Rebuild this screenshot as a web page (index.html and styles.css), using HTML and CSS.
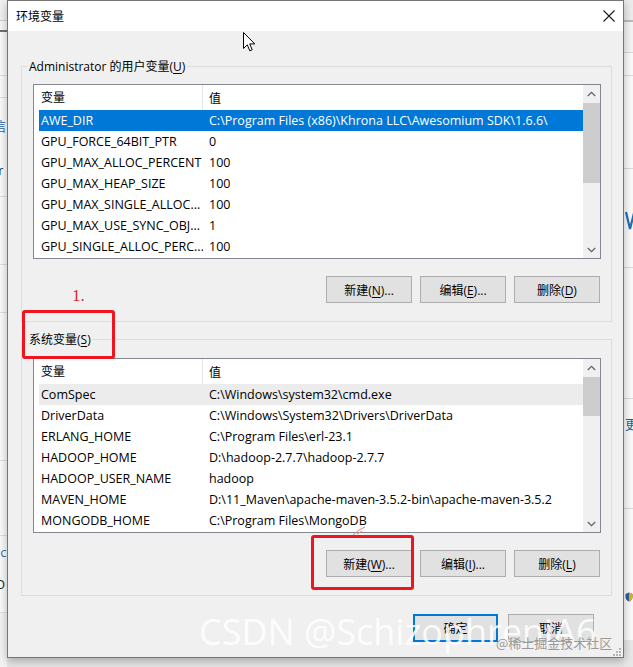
FILE: index.html
```html
<!DOCTYPE html>
<html lang="zh-CN">
<head>
<meta charset="utf-8">
<title>环境变量</title>
<link rel="stylesheet" href="styles.css">
</head>
<body>
<div class="screen">
  <div class="bg bg-left">
    <span class="frag frag-xin">信</span>
    <span class="frag frag-r">r</span>
    <span class="frag frag-ic">ic</span>
    <span class="frag frag-o">O</span>
  </div>

  <div class="dialog">
    <div class="titlebar">
      <span class="title">环境变量</span>
      <svg class="close" width="12" height="12" viewBox="0 0 12 12"><path d="M0.5 0.5 L11.5 11.5 M11.5 0.5 L0.5 11.5" stroke="#1a1a1a" stroke-width="1.1" fill="none"/></svg>
    </div>

    <div class="body">
      <fieldset class="group">
        <legend>Administrator 的用户变量(<u>U</u>)</legend>
        <div class="group-inner">
          <div class="list">
            <div class="list-main">
              <div class="head"><span class="c1">变量</span><span class="c2">值</span></div>
              <div class="row sel"><span class="c1">AWE_DIR</span><span class="c2">C:\Program Files (x86)\Khrona LLC\Awesomium SDK\1.6.6\</span></div>
              <div class="row"><span class="c1">GPU_FORCE_64BIT_PTR</span><span class="c2">0</span></div>
              <div class="row"><span class="c1">GPU_MAX_ALLOC_PERCENT</span><span class="c2">100</span></div>
              <div class="row"><span class="c1">GPU_MAX_HEAP_SIZE</span><span class="c2">100</span></div>
              <div class="row"><span class="c1">GPU_MAX_SINGLE_ALLOC...</span><span class="c2">100</span></div>
              <div class="row"><span class="c1">GPU_MAX_USE_SYNC_OBJ...</span><span class="c2">1</span></div>
              <div class="row"><span class="c1">GPU_SINGLE_ALLOC_PERC...</span><span class="c2">100</span></div>
            </div>
            <div class="scrollbar">
              <div class="arrow"><svg width="9" height="6" viewBox="0 0 9 6"><path d="M0.8 5 L4.5 1.3 L8.2 5" stroke="#606060" stroke-width="1.2" fill="none"/></svg></div>
              <div class="track"><div class="thumb thumb-user"></div></div>
              <div class="arrow"><svg width="9" height="6" viewBox="0 0 9 6"><path d="M0.8 1 L4.5 4.7 L8.2 1" stroke="#606060" stroke-width="1.2" fill="none"/></svg></div>
            </div>
          </div>
          <div class="btnrow">
            <button class="btn">新建(<u>N</u>)...</button>
            <button class="btn">编辑(<u>E</u>)...</button>
            <button class="btn">删除(<u>D</u>)</button>
          </div>
        </div>
      </fieldset>

      <fieldset class="group group-sys">
        <legend>系统变量(<u>S</u>)</legend>
        <div class="group-inner">
          <div class="list">
            <div class="list-main">
              <div class="head"><span class="c1">变量</span><span class="c2">值</span></div>
              <div class="row sel-dim"><span class="c1">ComSpec</span><span class="c2">C:\Windows\system32\cmd.exe</span></div>
              <div class="row"><span class="c1">DriverData</span><span class="c2">C:\Windows\System32\Drivers\DriverData</span></div>
              <div class="row"><span class="c1">ERLANG_HOME</span><span class="c2">C:\Program Files\erl-23.1</span></div>
              <div class="row"><span class="c1">HADOOP_HOME</span><span class="c2">D:\hadoop-2.7.7\hadoop-2.7.7</span></div>
              <div class="row"><span class="c1">HADOOP_USER_NAME</span><span class="c2">hadoop</span></div>
              <div class="row"><span class="c1">MAVEN_HOME</span><span class="c2">D:\11_Maven\apache-maven-3.5.2-bin\apache-maven-3.5.2</span></div>
              <div class="row"><span class="c1">MONGODB_HOME</span><span class="c2">C:\Program Files\MongoDB</span></div>
            </div>
            <div class="scrollbar">
              <div class="arrow"><svg width="9" height="6" viewBox="0 0 9 6"><path d="M0.8 5 L4.5 1.3 L8.2 5" stroke="#606060" stroke-width="1.2" fill="none"/></svg></div>
              <div class="track"><div class="thumb thumb-sys"></div></div>
              <div class="arrow"><svg width="9" height="6" viewBox="0 0 9 6"><path d="M0.8 1 L4.5 4.7 L8.2 1" stroke="#606060" stroke-width="1.2" fill="none"/></svg></div>
            </div>
          </div>
          <div class="btnrow">
            <button class="btn">新建(<u>W</u>)...</button>
            <button class="btn">编辑(<u>I</u>)...</button>
            <button class="btn">删除(<u>L</u>)</button>
          </div>
        </div>
      </fieldset>

      <div class="footer">
        <button class="btn btn-ok">确定</button>
        <button class="btn btn-cancel">取消</button>
      </div>
    </div>
  </div>

  <div class="bg bg-right">
    <svg class="frag-v" width="9" height="20" viewBox="0 0 9 20"><path d="M1 1 L5 18 L9 2" stroke="#1f6fb5" stroke-width="2.2" fill="none"/></svg>
    <span class="frag frag-geng">更</span>
    <svg class="frag-shield" width="8" height="10" viewBox="0 0 8 10"><path d="M4 0.5 L7.5 2 L7.5 5 C7.5 7.5 5.5 9 4 9.5 C2.5 9 0.5 7.5 0.5 5 L0.5 2 Z" fill="#2a5d9f"/><path d="M4 0.5 L7.5 2 L7.5 5 C7.5 7.5 5.5 9 4 9.5 Z" fill="#e0b020"/></svg>
  </div>

  <svg class="cursor" width="13" height="20" viewBox="0 0 13 20"><path d="M0.5 0.5 L0.5 16.5 L4.3 12.8 L6.8 18.8 L9.2 17.8 L6.7 11.9 L11.8 11.9 Z" fill="#fff" stroke="#000" stroke-width="1"/></svg>

  <div class="anno-box anno-box-1"></div>
  <div class="anno-num">1.</div>
  <div class="anno-box anno-box-2"></div>
  <svg class="anno-scribble" width="14" height="10" viewBox="0 0 14 10"><path d="M1 9 L7 4 L13 1 M5 8 L10 5" stroke="#f08080" stroke-width="1" fill="none"/></svg>

  <div class="watermark">CSDN @SchizophreniA6</div>
  <div class="watermark-juejin">@稀土掘金技术社区</div>
  <svg class="grip" width="9" height="9" viewBox="0 0 9 9"><g fill="#b5b5b5"><rect x="7" y="1" width="2" height="2"/><rect x="4" y="4" width="2" height="2"/><rect x="7" y="4" width="2" height="2"/><rect x="1" y="7" width="2" height="2"/><rect x="4" y="7" width="2" height="2"/><rect x="7" y="7" width="2" height="2"/></g></svg>
</div>
</body>
</html>
```

FILE: styles.css
```css
* { box-sizing: border-box; }

html, body {
  margin: 0;
  padding: 0;
}

body {
  width: 633px;
  height: 667px;
  overflow: hidden;
  font-family: "Open Sans", "Noto Sans CJK SC", sans-serif;
  font-size: 12px;
  color: #000;
  background: #e9e9e9;
}

.screen {
  position: relative;
  width: 633px;
  height: 667px;
  display: flex;
  align-items: flex-start;
  background: #e6e6e6;
  overflow: hidden;
}

/* background application strips */
.bg {
  height: 667px;
  display: flex;
  flex-direction: column;
  overflow: hidden;
  font-family: "Noto Sans CJK SC", sans-serif;
}

.bg-left {
  width: 7px;
  background: linear-gradient(to bottom,
    #f2f2f2 0 20px, #cfcfcf 20px 21px, #f7f7f7 21px 30px,
    #6f6f6f 30px 32px, #fafafa 32px 75px, #dedede 75px 76px,
    #fafafa 76px 97px, #dedede 97px 98px, #fafafa 98px 196px,
    #dedede 196px 197px, #fafafa 197px 264px, #dedede 264px 265px,
    #fafafa 265px 312px, #dedede 312px 313px, #fafafa 313px 460px,
    #dedede 460px 461px, #fafafa 461px 535px, #dedede 535px 536px,
    #fafafa 536px 612px, #dedede 612px 613px, #f4f4f4 613px);
}

.bg-right {
  width: 9px;
  background: linear-gradient(to bottom,
    #ececec 0 20px, #bdbdbd 20px 22px, #f4f4f4 22px 52px,
    #d8d8d8 52px 53px, #fafafa 53px 75px, #dadada 75px 76px,
    #fafafa 76px 168px, #dadada 168px 169px, #fafafa 169px 267px,
    #dadada 267px 268px, #fafafa 268px 398px, #dadada 398px 399px,
    #fafafa 399px 508px, #dadada 508px 509px, #fafafa 509px 640px,
    #e8e8e8 640px);
  align-items: flex-start;
}

.frag {
  display: block;
  font-size: 13px;
  line-height: 16px;
  white-space: nowrap;
}

.frag-xin { margin-top: 118px; margin-left: -7px; color: #1e5fa8; }
.frag-r { margin-top: 28px; margin-left: -2px; color: #333; }
.frag-ic { margin-top: 366px; margin-left: -3px; color: #2a6ebd; font-family: "Open Sans", sans-serif; }
.frag-o { margin-top: 16px; margin-left: -5px; color: #222; font-family: "Open Sans", sans-serif; }

.frag-v { margin-top: 211px; margin-left: 1px; }
.frag-geng { margin-top: 185px; margin-left: 1px; color: #1e5fa8; }
.frag-shield { margin-top: 160px; margin-left: 1px; }

/* dialog */
.dialog {
  position: relative;
  z-index: 1;
  width: 617px;
  height: 658px;
  border: 1px solid #767676;
  background: #f0f0f0;
  box-shadow: 0 3px 9px rgba(0, 0, 0, 0.28);
  display: flex;
  flex-direction: column;
}

.titlebar {
  height: 30px;
  background: #fff;
  display: flex;
  align-items: center;
  justify-content: space-between;
  padding: 0 8px;
  flex: none;
}

.title {
  font-family: "Noto Sans CJK SC", sans-serif;
  font-size: 12px;
  line-height: 16px;
}

.body {
  flex: 1;
  padding: 0 11px 0 13px;
  display: flex;
  flex-direction: column;
}

.group {
  margin: 27px 0 0;
  padding: 0;
  border: 1px solid #dcdcdc;
  min-width: 0;
}

.group legend {
  margin-left: 5px;
  padding: 0 2px;
  line-height: 17px;
  font-size: 12px;
}

.group-sys {
  margin-top: 9px;
}

.group-inner {
  padding: 9px 10px 18px 11px;
}

.group-sys .group-inner {
  padding-top: 10px;
}

u {
  text-decoration: underline;
  text-underline-offset: 2px;
}

/* list view */
.list {
  height: 175px;
  border: 1px solid #828790;
  background: #fff;
  display: flex;
}

.list-main {
  flex: 1;
  min-width: 0;
  padding-left: 5px;
  overflow: hidden;
}

.head {
  height: 25px;
  display: flex;
  align-items: center;
  margin-left: -5px;
  padding-left: 5px;
}

.head .c1 {
  border-right: 1px solid #e5e5e5;
  height: 25px;
  line-height: 25px;
}

.row {
  height: 21px;
  line-height: 21px;
  display: flex;
  white-space: nowrap;
  font-size: 12.5px;
}

.c1 {
  width: 164px;
  flex: none;
  padding-left: 2px;
  overflow: hidden;
  white-space: nowrap;
}

.c2 {
  padding-left: 6px;
  white-space: nowrap;
  overflow: hidden;
}

.sel {
  background: #0078d7;
  color: #fff;
}

.sel-dim {
  background: #ececec;
}

.scrollbar {
  width: 17px;
  flex: none;
  background: #f0f0f0;
  display: flex;
  flex-direction: column;
}

.arrow {
  height: 17px;
  flex: none;
  display: flex;
  align-items: center;
  justify-content: center;
}

.track {
  flex: 1;
}

.thumb {
  background: #cdcdcd;
  margin-top: 1px;
}

.thumb-user { height: 80px; }
.thumb-sys { height: 39px; }

/* buttons */
.btnrow {
  display: flex;
  justify-content: flex-end;
  gap: 8px;
  margin-top: 17px;
  padding-right: 1px;
}

.btn {
  width: 86px;
  height: 27px;
  margin: 0;
  padding: 0;
  border: 1px solid #adadad;
  background: #e1e1e1;
  font-family: "Open Sans", "Noto Sans CJK SC", sans-serif;
  font-size: 12px;
  color: #000;
}

.footer {
  display: flex;
  justify-content: flex-end;
  gap: 10px;
  margin-top: 18px;
  padding-right: 18px;
}

.footer .btn {
  height: 28px;
}

.btn-ok {
  width: 85px;
  border: 2px solid #0078d7;
}

/* overlays */
.cursor {
  position: absolute;
  left: 243px;
  top: 32px;
  z-index: 5;
}

.anno-box {
  position: absolute;
  z-index: 5;
  border: 3px solid #f0141e;
  border-radius: 3px;
}

.anno-box-1 {
  left: 22px;
  top: 310px;
  width: 93px;
  height: 49px;
}

.anno-box-2 {
  left: 311px;
  top: 535px;
  width: 103px;
  height: 55px;
}

.anno-num {
  position: absolute;
  z-index: 5;
  left: 72px;
  top: 286px;
  font-family: "Liberation Serif", serif;
  font-size: 17px;
  line-height: 20px;
  color: #e0252b;
}

.anno-scribble {
  position: absolute;
  z-index: 5;
  left: 352px;
  top: 526px;
}

.watermark {
  position: absolute;
  z-index: 6;
  left: 199px;
  top: 608px;
  font-family: "Open Sans", sans-serif;
  font-size: 36px;
  line-height: 48px;
  color: rgba(255, 255, 255, 0.85);
  white-space: nowrap;
}

.watermark-juejin {
  position: absolute;
  z-index: 7;
  left: 496px;
  top: 634px;
  font-family: "Noto Sans CJK SC", sans-serif;
  font-size: 13px;
  line-height: 17px;
  color: #9a9a9a;
  white-space: nowrap;
}

.grip {
  position: absolute;
  z-index: 7;
  left: 612px;
  top: 647px;
}
```
